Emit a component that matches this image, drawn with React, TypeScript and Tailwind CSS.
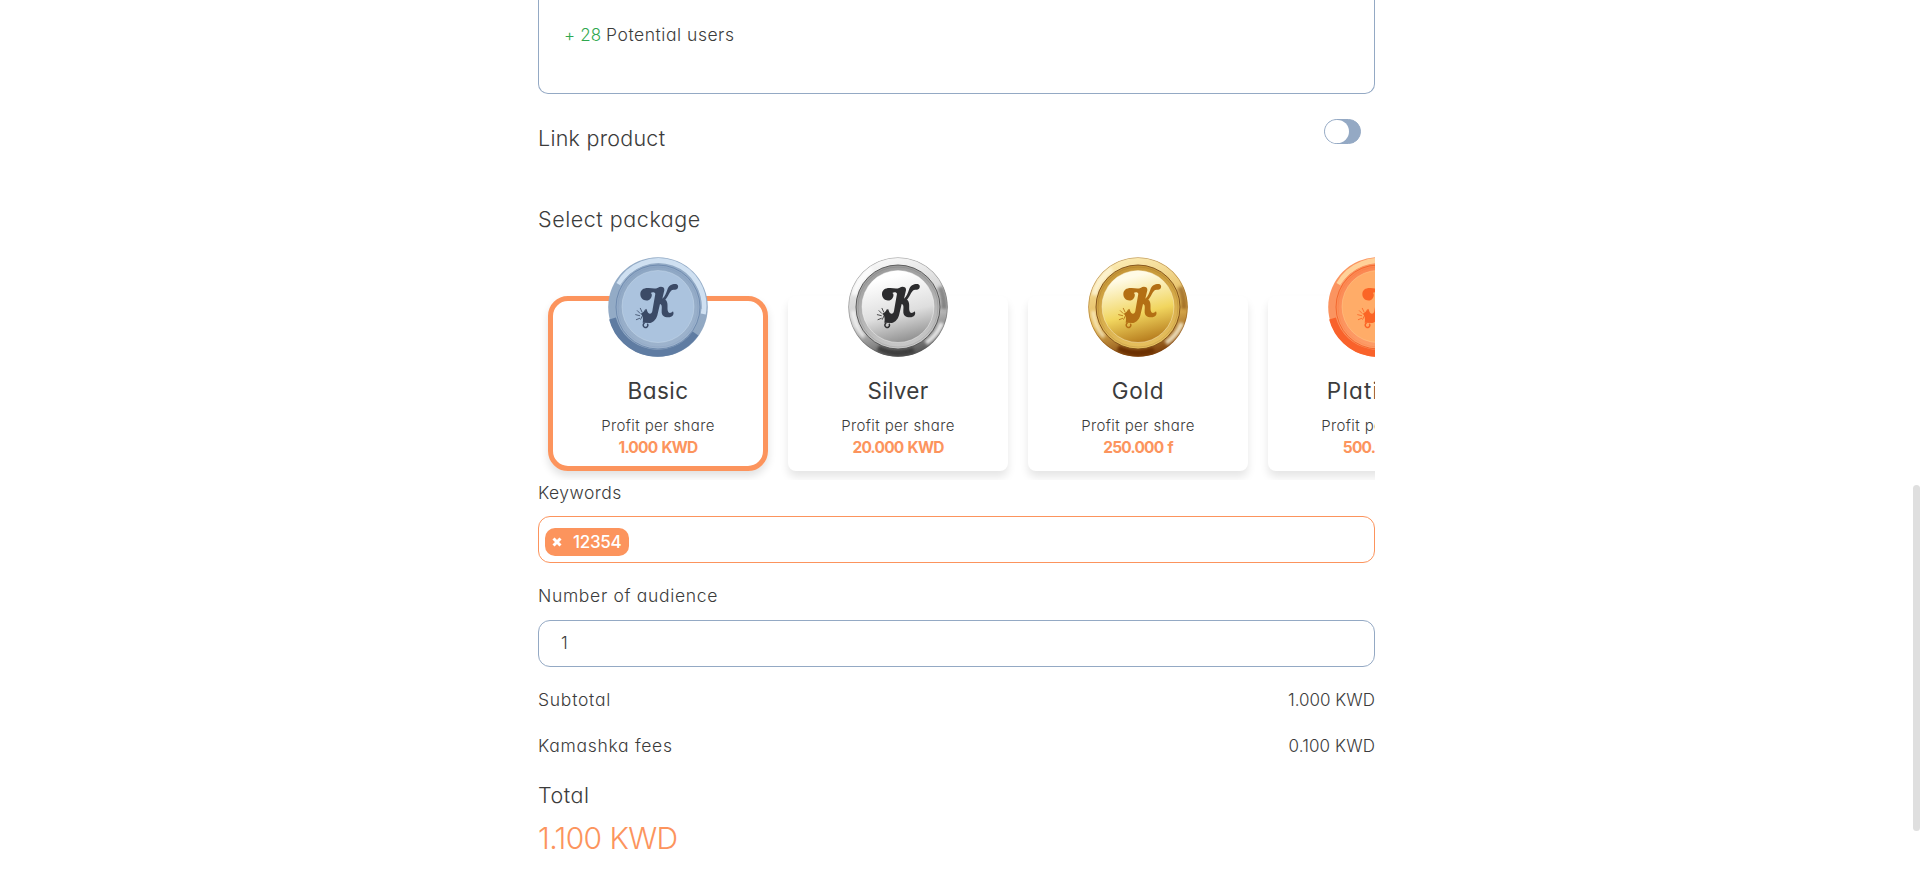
type Tone = {
  id: string;
  rim: [string, string, string];
  groove: string;
  ring: [string, string];
  face: [string, string, string];
  mark: string;
  flat: boolean;
  light: string;
  dark: string;
  shift: number;
};

const tones: Record<string, Tone> = {
  basic: { id: "basic", rim: ["#93abc6", "#93abc6", "#8fa5bf"], groove: "#6c88ad", ring: ["#8da6c3", "#9db3cd"], face: ["#abc3de", "#abc3de", "#abc3de"], mark: "#3b4a66", flat: true, light: "#cfe0f1", dark: "#5f7ca2", shift: 0 },
  silver: { id: "silver", rim: ["#fafafa", "#c8c8c8", "#555555"], groove: "#505050", ring: ["#9a9a9a", "#c8c8c8"], face: ["#ffffff", "#dedede", "#8f8f8f"], mark: "#2c2c2e", flat: false, light: "#ffffff", dark: "#3d3d3d", shift: 5 },
  gold: { id: "gold", rim: ["#fdeeb8", "#e2b653", "#7d400c"], groove: "#7c4c16", ring: ["#c49435", "#e6c05e"], face: ["#fffbe6", "#f1d55e", "#b57a1c"], mark: "#b36f14", flat: false, light: "#fff8dc", dark: "#6b2f06", shift: 9 },
  platinum: { id: "platinum", rim: ["#fb9460", "#fb9460", "#fb8a54"], groove: "#f2642a", ring: ["#fb8650", "#fd9d68"], face: ["#ffac68", "#ffac68", "#ffac68"], mark: "#fb6526", flat: true, light: "#ffd199", dark: "#f9622b", shift: 6 },
};

function Coin({ t }: { t: Tone }) {
  return (
    <svg viewBox="0 0 100 100" className="block size-full">
      <defs>
        <linearGradient id={`${t.id}-rim`} x1="0.3" y1="0" x2="0.55" y2="1">
          <stop offset="0" stopColor={t.rim[0]} />
          <stop offset="0.6" stopColor={t.rim[1]} />
          <stop offset="1" stopColor={t.rim[2]} />
        </linearGradient>
        <linearGradient id={`${t.id}-ring`} x1="0.3" y1="0" x2="0.5" y2="1">
          <stop offset="0" stopColor={t.ring[0]} />
          <stop offset="1" stopColor={t.ring[1]} />
        </linearGradient>
        <linearGradient id={`${t.id}-face`} x1="0.35" y1="0" x2="0.6" y2="1">
          <stop offset="0.1" stopColor={t.face[0]} />
          <stop offset="0.6" stopColor={t.face[1]} />
          <stop offset="1" stopColor={t.face[2]} />
        </linearGradient>
        <filter id={`${t.id}-soft`} x="-20%" y="-20%" width="140%" height="140%">
          <feGaussianBlur stdDeviation="1.8" />
        </filter>
        <clipPath id={`${t.id}-clip`}>
          <circle cx="50" cy="50" r="49.8" />
        </clipPath>
      </defs>
      <circle cx="50" cy="50" r="49.8" fill={`url(#${t.id}-rim)`} />
      {t.flat ? (
        <g fill="none">
          <path d="M4.5 61.5A46.5 46.5 0 0 0 87.5 76.5" stroke={t.dark} strokeWidth="7" />
          <path d="M10.6 27.2A45.5 45.5 0 0 1 95.3 57" stroke={t.light} strokeWidth="5" />
          <path d="M12.5 28A43.9 43.9 0 0 1 93.6 52" stroke={t.rim[0]} strokeWidth="0.7" />
        </g>
      ) : (
        <g fill="none" clipPath={`url(#${t.id}-clip)`}>
          <g filter={`url(#${t.id}-soft)`}>
            <path d="M92 30A46 46 0 0 1 96 52" stroke={t.dark} strokeWidth="6" opacity="0.5" />
            <path d="M30 91A46 46 0 0 0 66 93" stroke={t.dark} strokeWidth="6" />
            <path d="M78 86A46 46 0 0 0 94 66" stroke={t.light} strokeWidth="5" opacity="0.8" />
            <path d="M6 38A46 46 0 0 1 24 12" stroke={t.light} strokeWidth="6" opacity="0.8" />
            <path d="M5 54A46 46 0 0 0 16 80" stroke={t.light} strokeWidth="4" opacity="0.7" />
          </g>
          <circle cx="50" cy="50" r="49.5" stroke={t.rim[2]} strokeWidth="0.6" opacity="0.7" />
        </g>
      )}
      <circle cx="50" cy="50" r="42" fill={`url(#${t.id}-ring)`} stroke={t.groove} strokeWidth="0.9" />
      <circle cx="50" cy="50" r="40" fill="none" stroke={t.groove} strokeWidth="0.5" opacity="0.35" />
      <circle cx="50" cy="49.5" r="36" fill={`url(#${t.id}-face)`} stroke={t.light} strokeWidth="0.8" strokeOpacity="0.5" />
      <g transform={`translate(${-3 + t.shift / 3} -3) scale(0.3333)`} fill={t.mark}>
        <path d="M106 121C106 107 117 101 131 102C142 103 150 106 159 101C166 96 180 98 178 109L172 134C181 126 183 117 187 107C191 95 200 90 211 90C219 90 222 98 217 104C213 109 207 106 202 108C194 111 191 126 181 137C190 143 187 157 188 169C189 177 196 180 204 172C209 182 202 190 190 190C177 190 169 184 170 170C171 159 171 151 165 150L158 180C155 195 147 203 136 207L113 206C115 197 114 189 111 183L107 180C112 176 117 174 121 169L124 164C127 170 127 177 134 179C141 180 142 172 143 165L151 119C148 114 142 114 137 117C143 119 141 132 133 137C121 144 106 136 106 121Z" />
        <path d="M119 207A7 7 0 1 0 127 209" fill="none" stroke={t.mark} strokeWidth="4.5" />
        <path d="M107 196L121 167M104 185L92 182M105 178L97 170M111 174L106 163M104 193L94 197" fill="none" stroke={t.mark} strokeWidth="2.5" strokeLinecap="round" />
      </g>
    </svg>
  );
}

const packages = [
  { tone: "basic", name: "Basic", price: "1.000 KWD", selected: true, spacing: "tracking-[0.5px]" },
  { tone: "silver", name: "Silver", price: "20.000 KWD", selected: false, spacing: "tracking-[0.3px]" },
  { tone: "gold", name: "Gold", price: "250.000 f", selected: false, spacing: "tracking-[0.8px]" },
  { tone: "platinum", name: "Platinum", price: "500.000 f", selected: false, spacing: "tracking-[1.2px]" },
];

export default function App() {
  return (
    <div className="relative h-[869px] overflow-hidden bg-white font-['Inter',sans-serif] text-[17px] leading-6 font-[350] text-[#3c3c3c] [font-feature-settings:'cv11']">
      <main className="ml-[538px] flex w-[837px] flex-col">
        <section className="h-[94px] rounded-b-[10px] border border-t-0 border-[#94a9c4] pt-[23px] pl-[25px]">
          <span className="tracking-[0.15px] text-[#2fa84f]">+ 28</span> <span className="text-[17.5px] tracking-[0.53px]">Potential users</span>
        </section>
        <section className="flex h-[102px] justify-between pt-[25px] pr-[14px]">
          <h2 className="pt-[5px] text-[21.5px] leading-7 tracking-[0.25px]">Link product</h2>
          <button className="flex h-[25px] w-[37px] rounded-full border border-[#94a9c4] bg-[#94a9c4]"><i className="h-[23px] w-[24px] rounded-full bg-white" /></button>
        </section>
        <h2 className="h-[44px] pt-[9px] text-[21.5px] leading-7 tracking-[0.55px]">Select package</h2>
        <section className="flex h-[240px] gap-5 overflow-hidden pt-[17px] pl-[10px]">
          {packages.map((p) => (
            <article key={p.name} className="flex h-[214px] w-[220px] shrink-0 flex-col pt-[39px]">
              <div className={p.selected ? "flex h-[175px] flex-col items-center rounded-[20px] border-[5px] border-[#fc945d] shadow-[0_5px_8px_rgba(0,0,0,0.12)]" : "flex h-[175px] flex-col items-center rounded-lg border-[5px] border-transparent shadow-[0_6px_8px_rgba(0,0,0,0.1)]"}>
                <div className="-mt-[44px] size-[100px]"><Coin t={tones[p.tone]} /></div>
                <h3 className={`mt-[18px] text-[22.5px] leading-8 font-normal ${p.spacing}`}>{p.name}</h3>
                <p className="mt-[8px] text-[15px] leading-[22px] tracking-[0.38px]">Profit per share</p>
                <p className="text-[15.5px] leading-[22px] font-bold tracking-[-0.8px] text-[#fc945d] [word-spacing:1.2px]">{p.price}</p>
              </div>
            </article>
          ))}
        </section>
        <label className="h-[36px] pt-[1px] text-[17.5px] tracking-[0.45px]">Keywords</label>
        <div className="flex h-[47px] items-center rounded-xl border border-[#fc945d] pt-[5px] pl-[6px]">
          <div className="flex h-7 w-[84px] items-center rounded-[10px] bg-[#fc945d] pl-[7px] font-medium text-white">
            <svg viewBox="0 0 10 10" className="size-[10px]"><path d="M1.5 1.5L8.5 8.5M8.5 1.5L1.5 8.5" stroke="white" strokeWidth="3" /></svg>
            <span className="ml-[11px] tracking-[-0.3px]">12354</span>
          </div>
        </div>
        <label className="h-[57px] pt-[21px] text-[17.5px] tracking-[0.67px]">Number of audience</label>
        <div className="flex h-[47px] items-center rounded-xl border border-[#94a9c4] pb-[1px] pl-[22px]">1</div>
        <div className="flex h-[46px] justify-between pt-[21px]"><span className="text-[17.5px] tracking-[0.75px]">Subtotal</span><span>1.000 KWD</span></div>
        <div className="flex h-[46px] justify-between pt-[21px]"><span className="text-[17.5px] tracking-[0.7px]">Kamashka fees</span><span className="tracking-[0.1px]">0.100 KWD</span></div>
        <h2 className="pt-[22px] text-[21.5px] leading-7 tracking-[0.5px]">Total</h2>
        <p className="pt-[9px] text-[30px] leading-10 tracking-[-0.6px] text-[#fc945d]">1.100 KWD</p>
      </main>
      <div className="absolute top-[485px] right-0 h-[346px] w-[7px] rounded-full bg-[#dfdfdf]" />
    </div>
  );
}
